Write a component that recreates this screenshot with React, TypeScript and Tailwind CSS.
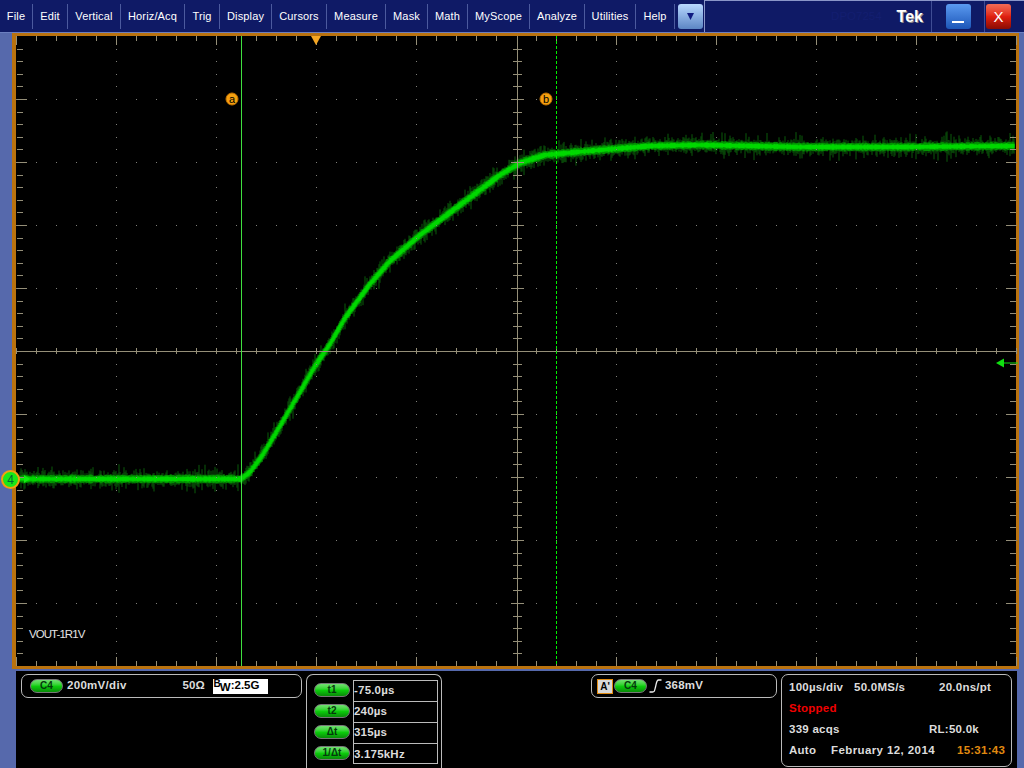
import React, { useMemo } from 'react';

const menus = [
  { name: 'File', w: 'w-[33px]' },
  { name: 'Edit', w: 'w-[35px]' },
  { name: 'Vertical', w: 'w-[53px]' },
  { name: 'Horiz/Acq', w: 'w-[64px]' },
  { name: 'Trig', w: 'w-[35px]' },
  { name: 'Display', w: 'w-[52px]' },
  { name: 'Cursors', w: 'w-[55px]' },
  { name: 'Measure', w: 'w-[59px]' },
  { name: 'Mask', w: 'w-[42px]' },
  { name: 'Math', w: 'w-[40px]' },
  { name: 'MyScope', w: 'w-[62px]' },
  { name: 'Analyze', w: 'w-[55px]' },
  { name: 'Utilities', w: 'w-[51px]' },
  { name: 'Help', w: 'w-[39px]' },
];

// trace in page pixels
const curve: [number, number][] = [
  [20, 479], [241, 479], [250, 472], [262, 456], [280, 426], [300, 392], [315, 366], [330, 344],
  [345, 318], [370, 284], [390, 261], [420, 235], [460, 205], [500, 175], [520, 163], [545, 155],
  [600, 150], [650, 146], [700, 145], [800, 147], [900, 147], [1014, 146],
];

function curveY(x: number) {
  for (let i = 1; i < curve.length; i++) {
    if (x <= curve[i][0]) {
      const [x0, y0] = curve[i - 1];
      const [x1, y1] = curve[i];
      return y0 + ((y1 - y0) * (x - x0)) / (x1 - x0);
    }
  }
  return 146;
}

function Graticule() {
  const { dim, mid, bright } = useMemo(() => {
    let seed = 12345;
    const rnd = () => {
      seed = (seed * 16807) % 2147483647;
      return seed / 2147483647;
    };
    let dim = '';
    let mid = '';
    let bright = '';
    for (let x = 20; x < 1015; x += 1) {
      const y = curveY(x);
      const slope = Math.abs(curveY(x + 1) - y);
      const spike = 5 + rnd() * rnd() * 10 + slope;
      dim += `M${x} ${(y - spike * rnd() - 2).toFixed(1)}V${(y + spike * rnd() + 2).toFixed(1)}`;
      const m = 3 + rnd() * 1.5 + slope * 0.8;
      mid += `M${x} ${(y - m).toFixed(1)}V${(y + m).toFixed(1)}`;
      const b = 1.5 + rnd() * 1.2 + slope * 0.6;
      bright += `M${x} ${(y - b).toFixed(1)}V${(y + b).toFixed(1)}`;
    }
    return { dim, mid, bright };
  }, []);

  const xs: number[] = [];
  for (let x = 16; x <= 1016; x += 20) xs.push(x);
  const ys: number[] = [];
  for (let i = 1; i < 50; i++) ys.push(36 + i * 12.6);
  const tick = '#958f78';

  return (
    <svg width="1000" height="630" viewBox="16 36 1000 630" className="block overflow-visible">
      <rect x="16" y="36" width="1000" height="630" fill="#000" />
      {/* trace */}
      <path d={dim} stroke="#0a5a0a" strokeWidth="1" fill="none" />
      <path d={mid} stroke="#00b400" strokeWidth="1" fill="none" />
      <path d={bright} stroke="#00ee00" strokeWidth="1" fill="none" />
      {/* grid dots */}
      {[116, 216, 316, 416, 616, 716, 816, 916].map((x) =>
        ys.map((y, i) => <rect key={`${x}-${i}`} x={x} y={Math.round(y)} width="1" height="1" fill="#80807a" />),
      )}
      {[99, 162, 225, 288, 414, 477, 540, 603].map((y) =>
        xs.map((x) => <rect key={`${x}-${y}`} x={x} y={y} width="1" height="1" fill="#80807a" />),
      )}
      {/* centre lines */}
      <rect x="16" y="351" width="1000" height="1" fill={tick} />
      <rect x="517" y="36" width="1" height="630" fill={tick} />
      {/* edge and centre ticks */}
      {xs.map((x, i) => {
        const px = x === 516 ? 517 : x;
        const len = i % 5 === 0 ? 9 : 5;
        return (
          <g key={x} fill={tick}>
            <rect x={px} y="36" width="1" height={len} />
            <rect x={px} y={666 - len} width="1" height={len} />
            <rect x={px} y="348" width="1" height="6" />
          </g>
        );
      })}
      {ys.map((y, i) => {
        const py = Math.round(y);
        const major = (i + 1) % 5 === 0;
        return (
          <g key={i} fill={tick}>
            <rect x="17" y={py} width={major ? 10 : 6} height="1" />
            <rect x={major ? 1006 : 1010} y={py} width={major ? 10 : 6} height="1" />
            <rect x={major ? 511 : 513} y={py} width={major ? 13 : 9} height="1" />
          </g>
        );
      })}
      {/* cursors */}
      <rect x="241" y="36" width="1" height="630" fill="#3fe03f" />
      <line x1="556.5" y1="36" x2="556.5" y2="666" stroke="#00f000" strokeWidth="1" strokeDasharray="3 2" />
      <g>
        <circle cx="232" cy="99" r="6" fill="#f5a010" stroke="#c07000" />
        <text x="232" y="103" textAnchor="middle" fontSize="11" fontWeight="400" fill="#000" fontFamily="Liberation Sans, sans-serif">a</text>
        <circle cx="546" cy="99" r="6" fill="#f5a010" stroke="#c07000" />
        <text x="546" y="103" textAnchor="middle" fontSize="11" fontWeight="400" fill="#000" fontFamily="Liberation Sans, sans-serif">b</text>
      </g>
      {/* trigger position and level markers */}
      <path d="M311 36h10l-5 9z" fill="#f5a623" />
      <path d="M996 363l8-4.500v9z" fill="#10e010" />
      <rect x="1003" y="362.500" width="15" height="1" fill="#10e010" />
      <rect x="19" y="478.500" width="6" height="1" fill="#10f010" />
      <path d="M24 475v8l6-4z" fill="#10f010" />
      <text x="29" y="638" fontSize="11.500" fill="#e4e4e4" letterSpacing="-0.95" fontFamily="Liberation Sans, sans-serif">VOUT-1R1V</text>
    </svg>
  );
}

function Pill({ label, w = 'w-[33px]' }: { label: string; w?: string }) {
  return (
    <span className={`${w} h-[14px] rounded-full border border-[#777] bg-gradient-to-b from-[#70e070] via-[#0cd00c] to-[#088a08] text-[10px] font-bold leading-[12px] text-center text-[#04380c] inline-block shrink-0`}>
      {label}
    </span>
  );
}

const cursorRows = [
  { label: 't1', value: '-75.0µs' },
  { label: 't2', value: '240µs' },
  { label: 'Δt', value: '315µs' },
  { label: '1/Δt', value: '3.175kHz' },
];

export default function App() {
  return (
    <div className="relative w-[1024px] h-[768px] overflow-hidden bg-[#5669ac] font-['Liberation_Sans',Arial,sans-serif]">
      {/* menu bar */}
      <header className="h-[33px] bg-[#0f1a66] border-b border-[#6c7fc0] flex">
        <nav className="flex items-center">
          {menus.map((m) => (
            <div key={m.name} className={`${m.w} h-[25px] flex items-center justify-center border-r border-[#4c5a9e] text-[11px] tracking-[0.15px] text-white`}>
              {m.name}
            </div>
          ))}
        </nav>
        <div className="ml-[3px] mt-[4px] w-[25px] h-[25px] rounded-[3px] bg-gradient-to-b from-[#b9d8ff] to-[#5d86c4] flex items-center justify-center">
          <svg width="9" height="9" viewBox="0 0 9 9"><path d="M1 1h7l-3.500 7z" fill="#101a80" /></svg>
        </div>
        <div className="ml-[1px] flex-1 flex border-t border-l border-[#8a96c8]">
          <div className="w-[227px] flex items-center justify-end border-r border-[#3f4d94] pr-[8px]">
            <span className="text-[11.500px] text-[#131e70] mr-[15px]">DPO7254</span>
            <span className="text-[16px] font-bold text-white [text-shadow:1px_1px_0_#888]">Tek</span>
          </div>
          <div className="w-[53px] flex items-start justify-center pt-[3px] border-r border-[#3f4d94]">
            <div className="w-[25px] h-[25px] rounded-[3px] bg-gradient-to-b from-[#5b9af0] to-[#1c56b8] flex items-end justify-center pb-[6px]">
              <div className="w-[12px] h-[2px] bg-white" />
            </div>
          </div>
          <div className="flex-1 pl-[1px] pt-[3px]">
            <div className="w-[25px] h-[25px] rounded-[3px] bg-gradient-to-b from-[#f26a55] via-[#e02010] to-[#8a0c04] flex items-center justify-center text-white text-[15px] leading-none">
              X
            </div>
          </div>
        </div>
      </header>

      {/* scope display */}
      <div className="relative ml-[12px] mr-[5px] w-[1007px] h-[636px] border-[3px] border-l-4 border-[#b9720f]">
        <Graticule />
      </div>
      <div className="absolute left-[1px] top-[470px] w-[19px] h-[19px] rounded-full bg-[#18e818] border-2 border-[#f0a010] flex items-center justify-center text-[12px] text-[#063] leading-none">
        4
      </div>

      {/* readouts */}
      <div className="ml-[16px] mt-[2px] w-[1001px] h-[97px] bg-black flex items-start pt-[3px] pl-[5px] text-[11.500px] font-bold text-[#dcdcdc]">
        <div className="w-[281px] h-[24px] border border-[#bbb] rounded-[7px] flex items-center pl-[8px]">
          <Pill label="C4" />
          <span className="ml-[4px] tracking-[0.3px]">200mV/div</span>
          <span className="ml-[56px]">50Ω</span>
          <span className="ml-[8px] w-[55px] h-[15px] bg-white text-black flex items-center pl-[1px] leading-none">
            <span className="relative -top-[2px] text-[10px]">B</span>
            <span className="relative top-[2px] -ml-[1px]">W</span>
            <span>:2.5G</span>
          </span>
        </div>

        <div className="ml-[4px] w-[136px] h-[94px] border border-[#bbb] border-b-0 rounded-t-[7px] flex pt-[5px] pl-[7px]">
          <div className="flex flex-col w-[39px] pt-[3px] gap-[7px]">
            {cursorRows.map((r) => (
              <Pill key={r.label} label={r.label} w="w-[36px]" />
            ))}
          </div>
          <div className="w-[85px] h-[84px] border border-[#bbb] border-b">
            {cursorRows.map((r, i) => (
              <div key={r.label} className={`h-[21px] flex items-center tracking-[0.2px] ${i < 3 ? 'border-b border-[#bbb]' : ''}`}>
                {r.value}
              </div>
            ))}
          </div>
        </div>

        <div className="ml-[149px] w-[186px] h-[24px] border border-[#bbb] rounded-[7px] flex items-center pl-[5px]">
          <span className="w-[16px] h-[15px] bg-[#d8d8d8] border border-[#e08a10] text-black text-[10px] leading-[13px] text-center">A'</span>
          <span className="ml-[1px] flex"><Pill label="C4" /></span>
          <svg width="15" height="14" viewBox="0 0 14 14" className="ml-[1px]">
            <path d="M1 13h3c2 0 2-1 3-5s1-7 3-7h3" stroke="#eee" strokeWidth="1.300" fill="none" />
          </svg>
          <span className="ml-[2px] tracking-[0.2px]">368mV</span>
        </div>

        <div className="ml-[4px] w-[231px] h-[93px] border border-[#bbb] rounded-[7px] pt-[5px] pl-[7px] pr-[5px] flex flex-col gap-[6px] tracking-[0.25px]">
          <div className="flex h-[15px] items-center">
            <span className="w-[65px]">100µs/div</span>
            <span className="w-[85px]">50.0MS/s</span>
            <span>20.0ns/pt</span>
          </div>
          <div className="flex h-[15px] items-center text-[#f00000]">Stopped</div>
          <div className="flex h-[15px] items-center">
            <span className="w-[140px]">339 acqs</span>
            <span>RL:50.0k</span>
          </div>
          <div className="flex h-[15px] items-center">
            <span className="w-[42px]">Auto</span>
            <span className="w-[126px] tracking-[0.4px]">February 12, 2014</span>
            <span className="text-[#e08a10]">15:31:43</span>
          </div>
        </div>
      </div>
    </div>
  );
}
